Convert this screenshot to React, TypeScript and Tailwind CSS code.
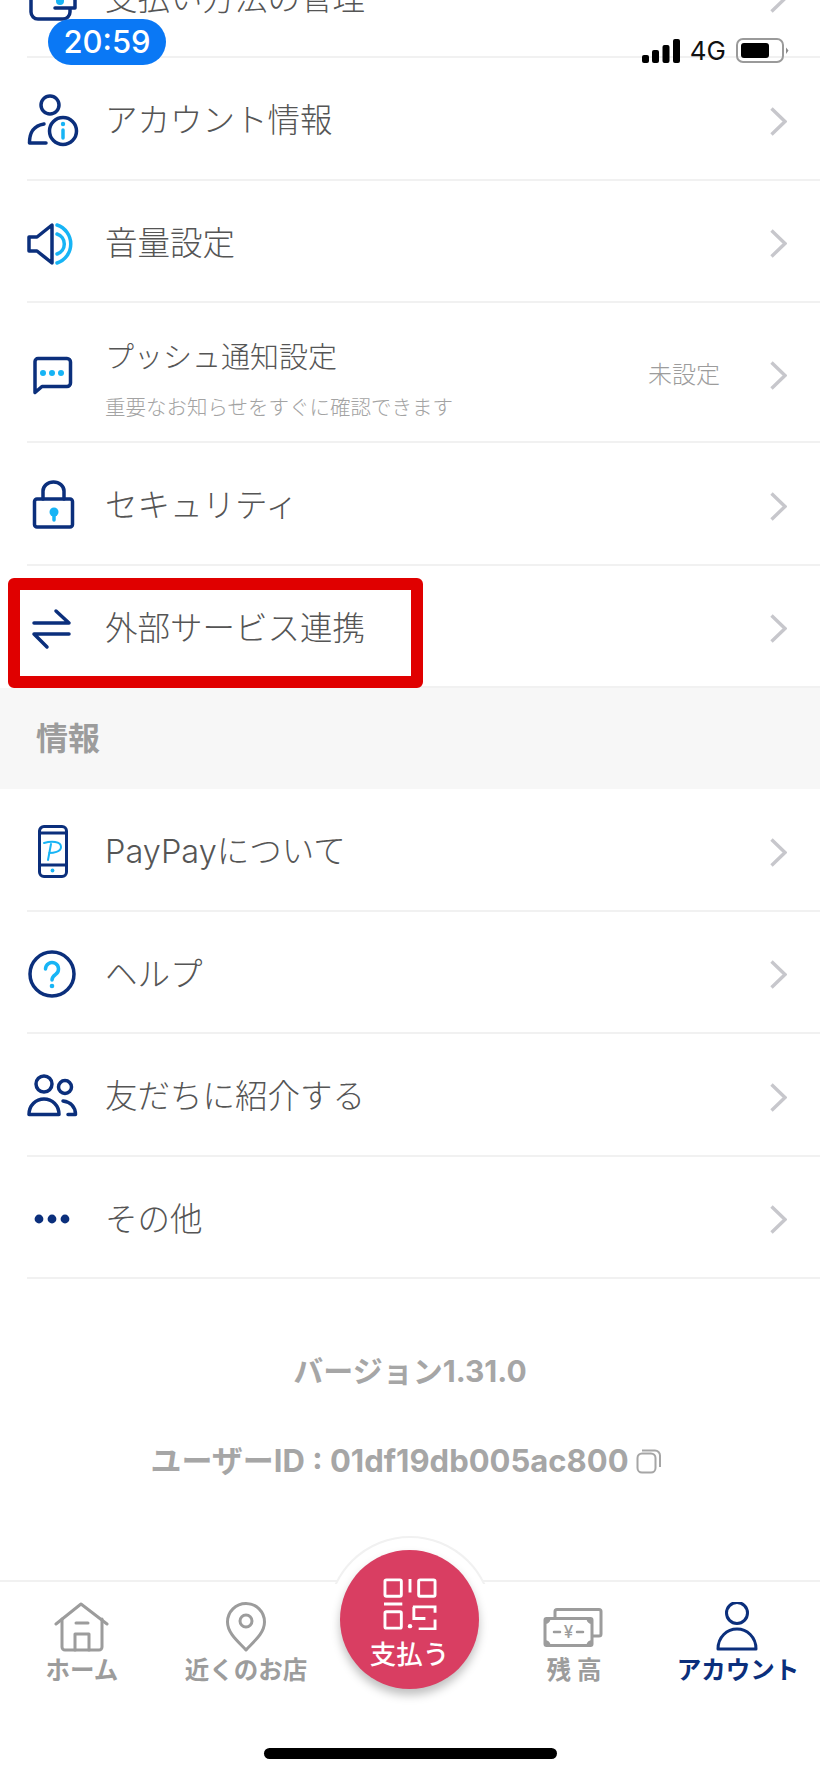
import React from 'react';

const NAVY = '#0b2f7c';
const CYAN = '#17b4f5';
const GRAY = '#9c9c9c';

const Svg: React.FC<{ w?: number; h?: number; children: React.ReactNode }> = ({ w = 56, h = 56, children }) => (
  <svg width={w} height={h} viewBox={`0 0 ${w} ${h}`} fill="none" strokeLinecap="round" strokeLinejoin="round" className="shrink-0">
    {children}
  </svg>
);

const WalletIcon = () => (
  <Svg>
    <g stroke={NAVY} strokeWidth="3.5">
      <path d="M5 10V43a7 7 0 0 0 7 7H37a7 7 0 0 0 7-7V40" />
      <path d="M29 39H49V24" />
    </g>
    <circle cx="34" cy="32" r="4" fill={CYAN} />
  </Svg>
);

const AccountIcon = () => (
  <Svg>
    <g stroke={NAVY} strokeWidth="3.5">
      <circle cx="24" cy="14" r="9" />
      <circle cx="37" cy="40" r="13.5" />
      <path d="M20 52H3.5C3.5 43 6 35 18 33" />
    </g>
    <path d="M37 39V47" stroke={CYAN} strokeWidth="3.5" />
    <circle cx="37" cy="33" r="2.2" fill={CYAN} />
  </Svg>
);

const VolumeIcon = () => (
  <Svg>
    <path d="M3 23H11L26 11V49L11 37H3Z" stroke={NAVY} strokeWidth="3.5" />
    <path d="M31 11A20 20 0 0 1 31 49" stroke={CYAN} strokeWidth="3.5" />
    <path d="M31 20A10.5 10.5 0 0 1 31 40" stroke={CYAN} strokeWidth="3.5" />
  </Svg>
);

const ChatIcon = () => (
  <Svg>
    <path d="M12 13.5H41a3.5 3.5 0 0 1 3.5 3.5V38a3.500 3.500 0 0 1-3.500 3.500H16L9 47.500V16.500a3 3 0 0 1 3-3Z" stroke={NAVY} strokeWidth="3.5" />
    <circle cx="17" cy="28" r="3" fill={CYAN} />
    <circle cx="26" cy="28" r="3" fill={CYAN} />
    <circle cx="35" cy="28" r="3" fill={CYAN} />
  </Svg>
);

const LockIcon = () => (
  <Svg>
    <rect x="8.5" y="23" width="38" height="28" rx="2.5" stroke={NAVY} strokeWidth="3.5" />
    <path d="M17 23V15a10.500 9 0 0 1 21 0V23" stroke={NAVY} strokeWidth="3.5" />
    <circle cx="28" cy="36" r="4.500" fill={CYAN} />
    <path d="M28 37V44" stroke={CYAN} strokeWidth="3.5" />
  </Svg>
);

const LinkIcon = () => (
  <Svg>
    <path d="M8 24H43L30 12M43 35H8L21 48" stroke={NAVY} strokeWidth="3.5" />
  </Svg>
);

const PhoneIcon = () => (
  <Svg>
    <rect x="13.5" y="4.5" width="27" height="50" rx="4.5" stroke={NAVY} strokeWidth="3" />
    <path d="M13.5 11H40.500M13.500 43H40.500" stroke={NAVY} strokeWidth="3" />
    <circle cx="26.5" cy="48.5" r="1.9" fill={CYAN} />
    <path d="M18 21C25 19 35 19 35 25C35 30 27 31 23 31M25 22L22 38" stroke={CYAN} strokeWidth="2" />
  </Svg>
);

const HelpIcon = () => (
  <Svg>
    <circle cx="26" cy="29" r="22" stroke={NAVY} strokeWidth="3.5" />
    <path d="M19.500 24a6.500 6.500 0 1 1 10 5.500c-2.500 1.700-3.500 2.500-3.500 5.500" stroke={CYAN} strokeWidth="3.5" />
    <circle cx="26" cy="41" r="2.300" fill={CYAN} />
  </Svg>
);

const FriendsIcon = () => (
  <Svg>
    <g stroke={NAVY} strokeWidth="3.5">
      <circle cx="18" cy="17" r="8" />
      <circle cx="39" cy="20" r="6.500" />
      <path d="M3 47.500C3 38 10 32 18 32C26 32 33 38 33 47.500Z" />
      <path d="M37 34C45 35 49.500 40 49.500 47.500H42" />
    </g>
  </Svg>
);

const DotsIcon = () => (
  <Svg>
    <circle cx="13" cy="29" r="4.400" fill={NAVY} />
    <circle cx="26" cy="29" r="4.400" fill={NAVY} />
    <circle cx="39" cy="29" r="4.400" fill={NAVY} />
  </Svg>
);

const Chevron = () => (
  <svg width="17" height="29" viewBox="0 0 17 29" fill="none" className="shrink-0 mt-[6px]">
    <path d="M1.500 1.500L15 14.500L1.500 27.500" stroke="#c7c7cc" strokeWidth="3.400" />
  </svg>
);

const Row: React.FC<{ icon: React.ReactNode; label: string }> = ({ icon, label }) => (
  <div className="ml-[27px] h-[122.5px] shrink-0 flex items-center border-b-2 border-[#f1f1f1] pr-[33px]">
    <div className="-ml-px w-[56px] pt-[2px]">{icon}</div>
    <span className="ml-[23px] pt-[6px] text-[32.5px] leading-none font-light text-[#555555]">{label}</span>
    <div className="ml-auto flex">
      <Chevron />
    </div>
  </div>
);

const PushRow = () => (
  <div className="ml-[27px] h-[140px] shrink-0 flex items-center border-b-2 border-[#f1f1f1] pr-[33px]">
    <div className="-ml-px w-[56px] pt-[2px]">
      <ChatIcon />
    </div>
    <div className="ml-[23px] pt-[17px] flex flex-col">
      <span className="text-[29px] leading-[34px] font-light text-[#555555]">プッシュ通知設定</span>
      <span className="mt-[21px] text-[20.5px] leading-[24px] font-light text-[#a3a3a3]">重要なお知らせをすぐに確認できます</span>
    </div>
    <span className="ml-auto mr-[50px] pt-[6px] text-[24px] font-light text-[#9c9c9c]">未設定</span>
    <Chevron />
  </div>
);

const StatusBar = () => (
  <div className="absolute top-[19px] left-0 right-0 flex items-start pl-[48px] pr-[30px]">
    <div className="w-[118px] h-[46px] rounded-[23px] bg-[#0a78f5] flex items-center justify-center text-[31px] font-medium text-white">
      20:59
    </div>
    <div className="ml-auto mt-[19px] flex items-center h-[25px]">
      <svg width="38" height="24" viewBox="0 0 38 24" className="shrink-0">
        <rect x="0" y="16" width="7" height="8" rx="2" fill="#000" />
        <rect x="10" y="11" width="7" height="13" rx="2" fill="#000" />
        <rect x="20.500" y="6" width="7" height="18" rx="2" fill="#000" />
        <rect x="31" y="0" width="7" height="24" rx="2" fill="#000" />
      </svg>
      <span className="ml-[10px] text-[26px] leading-none text-[#111]">4G</span>
      <svg width="54" height="26" viewBox="0 0 54 26" className="ml-[10px] shrink-0">
        <rect x="1" y="1" width="46" height="23" rx="6" fill="none" stroke="#9a9a9a" strokeWidth="2" />
        <rect x="5" y="5" width="28" height="15" rx="3" fill="#000" />
        <path d="M50 9.500L52.500 12.500L50 16Z" fill="#8a8a8a" />
      </svg>
    </div>
  </div>
);

const HomeIcon = () => (
  <Svg h={50}>
    <g stroke={GRAY} strokeWidth="3">
      <path d="M2 22L27 2L53 22" />
      <path d="M8 17V45a3 3 0 0 0 3 3H45a3 3 0 0 0 3-3V17" />
      <path d="M21 48V32H35V48M22 21H34" />
    </g>
  </Svg>
);

const PinIcon = () => (
  <Svg h={50}>
    <path d="M28 48C22 41 9.500 32 9.500 20a18.500 18.500 0 0 1 37 0C46.500 32 34 41 28 48Z" stroke={GRAY} strokeWidth="3" />
    <circle cx="28" cy="19" r="6" stroke={GRAY} strokeWidth="3" />
  </Svg>
);

const MoneyIcon = () => (
  <Svg w={62} h={50}>
    <g stroke={GRAY} strokeWidth="3">
      <path d="M12 16V9.500A2 2 0 0 1 14 7.500H56A2 2 0 0 1 58 9.500V32A2 2 0 0 1 56 34H50" />
      <rect x="2" y="16.500" width="47" height="27" rx="1.500" />
    </g>
    <path d="M2 16.500H7.500A5.500 5.500 0 0 1 2 22ZM49 16.500H43.500A5.500 5.500 0 0 0 49 22ZM2 43.500H7.500A5.500 5.500 0 0 0 2 38ZM49 43.500H43.500A5.500 5.500 0 0 1 49 38Z" fill={GRAY} />
    <path d="M11 30H17M34 30H40" stroke={GRAY} strokeWidth="2.500" />
    <text x="25.500" y="36" textAnchor="middle" fontSize="17" fontWeight="500" fill={GRAY} fontFamily="Inter, sans-serif">¥</text>
  </Svg>
);

const PersonIcon = () => (
  <Svg h={50}>
    <circle cx="27" cy="11" r="10.500" stroke={NAVY} strokeWidth="3" />
    <path d="M8 47C8 35 17 27 27 27C37 27 46 35 46 47Z" stroke={NAVY} strokeWidth="3" />
  </Svg>
);

const QrIcon = () => (
  <svg width="54" height="52" viewBox="0 0 56 54" fill="none" className="shrink-0" stroke="#ffffff" strokeWidth="3">
    <rect x="2" y="2" width="17" height="17" rx="1.500" />
    <rect x="37" y="2" width="17" height="17" rx="1.500" />
    <rect x="2" y="35" width="17" height="17" rx="1.500" />
    <path d="M28 1V15M1 27H20M31 30H54V36M32 30V42H44M54 43V53H37" />
    <circle cx="28" cy="50" r="2.300" fill="#ffffff" stroke="none" />
  </svg>
);

const NavItem: React.FC<{ icon: React.ReactNode; label: React.ReactNode; active?: boolean }> = ({ icon, label, active }) => (
  <div className="flex flex-col items-center">
    <div className="h-[50px] flex justify-center">{icon}</div>
    <span className={`mt-[3px] text-[24.5px] leading-[30px] font-bold whitespace-nowrap ${active ? 'text-[#0b2f7c]' : 'text-[#9c9c9c]'}`}>
      {label}
    </span>
  </div>
);

const BottomNav = () => (
  <div className="relative h-[196px] shrink-0 flex flex-col border-t-2 border-[#f1f1f1] bg-white">
    {/* white bump behind the pay button */}
    <div className="absolute -top-[46px] left-[327px] w-[166px] h-[48px] overflow-hidden">
      <div className="w-[166px] h-[166px] rounded-full border-2 border-[#f1f1f1] bg-white" />
    </div>
    <div className="absolute -top-[32px] left-[340px] w-[139px] h-[139px] rounded-full bg-[#d93e62] shadow-[0_6px_10px_rgba(0,0,0,0.25)] flex flex-col items-center pt-[28px]">
      <QrIcon />
      <span className="mt-[8px] text-[26.5px] leading-[32px] font-medium text-white">支払う</span>
    </div>
    <div className="grid grid-cols-5 pt-[20px]">
      <NavItem icon={<HomeIcon />} label="ホーム" />
      <NavItem icon={<PinIcon />} label="近くのお店" />
      <div />
      <NavItem icon={<MoneyIcon />} label="残 高" />
      <NavItem icon={<PersonIcon />} label="アカウント" active />
    </div>
    <div className="mt-auto mb-[17px] mx-auto w-[293px] h-[11px] rounded-full bg-black" />
  </div>
);

export default function App() {
  return (
    <div className="relative w-[820px] h-[1776px] overflow-hidden flex flex-col bg-white font-['Inter','Noto_Sans_CJK_JP',sans-serif]">
      <div className="-mt-[64.5px] flex-1 flex flex-col">
        <Row icon={<WalletIcon />} label="支払い方法の管理" />
        <Row icon={<AccountIcon />} label="アカウント情報" />
        <Row icon={<VolumeIcon />} label="音量設定" />
        <PushRow />
        <Row icon={<LockIcon />} label="セキュリティ" />
        <Row icon={<LinkIcon />} label="外部サービス連携" />
        <div className="h-[101px] shrink-0 bg-[#f7f7f7] flex items-center pl-[36px] text-[32px] font-bold text-[#9c9c9c]">情報</div>
        <Row icon={<PhoneIcon />} label="PayPayについて" />
        <Row icon={<HelpIcon />} label="ヘルプ" />
        <Row icon={<FriendsIcon />} label="友だちに紹介する" />
        <Row icon={<DotsIcon />} label="その他" />
        <div className="flex-1 flex flex-col items-center pt-[72px] font-bold text-[#a6a6a6]">
          <span className="text-[30px] leading-[40px]">バージョン1.31.0</span>
          <div className="mt-[50px] pr-[8px] flex items-center">
            <span className="text-[31px] leading-[40px]">ユーザーID : 01df19db005ac800</span>
            <svg width="26" height="26" viewBox="0 0 26 26" fill="none" className="ml-[7px] shrink-0" stroke="#a6a6a6" strokeWidth="2">
              <rect x="1.500" y="5.500" width="18" height="19" rx="4.500" />
              <path d="M6 2.500H19a5 5 0 0 1 5 5V19" />
            </svg>
          </div>
        </div>
      </div>
      <BottomNav />
      <StatusBar />
      {/* red highlight box */}
      <div className="absolute left-[8px] top-[578px] w-[415px] h-[110px] border-[12px] border-[#e00000] rounded-[6px]" />
    </div>
  );
}
